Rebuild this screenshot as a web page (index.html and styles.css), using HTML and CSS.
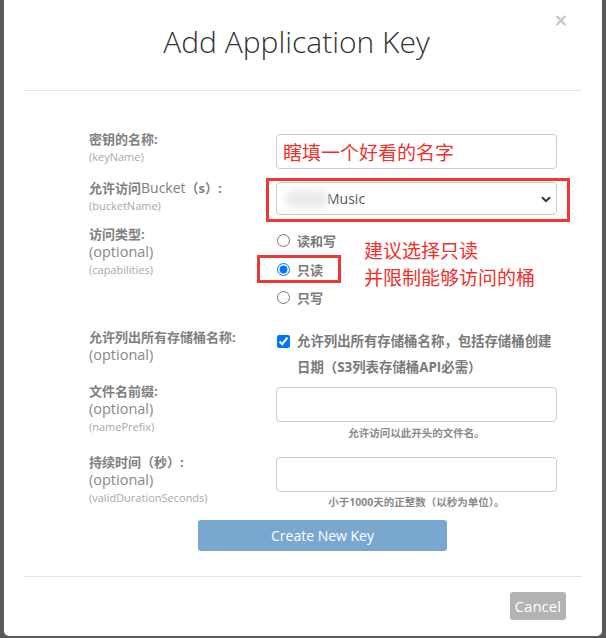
FILE: index.html
```html
<!DOCTYPE html>
<html lang="zh-CN">
<head>
  <meta charset="UTF-8">
  <meta name="viewport" content="width=device-width, initial-scale=1.0">
  <title>Add Application Key</title>
  <link rel="stylesheet" href="styles.css">
</head>
<body>
  <div class="modal">
    <button class="close">&times;</button>
    <div class="modal-header">
      <h2>Add Application Key</h2>
    </div>

    <form class="modal-body">
      <div class="row row-name">
        <div class="label">
          <div class="label-main">密钥的名称:</div>
          <div class="label-key">(keyName)</div>
        </div>
        <div class="control">
          <input type="text" class="input-field input-red" value="瞎填一个好看的名字">
        </div>
      </div>

      <div class="row row-bucket">
        <div class="label">
          <div class="label-main">允许访问<span class="latin">Bucket</span>（s）:</div>
          <div class="label-key">(bucketName)</div>
        </div>
        <div class="control">
          <div class="mark-box select-mark">
            <div class="select-wrap">
              <span class="blur-blob"></span>
              <select class="select-field">
                <option>Music</option>
              </select>
              <svg class="chevron" width="10" height="7" viewBox="0 0 10 7"><path d="M1 1.2 L5 5.2 L9 1.2" fill="none" stroke="#333" stroke-width="2"/></svg>
            </div>
          </div>
        </div>
      </div>

      <div class="row row-caps">
        <div class="label">
          <div class="label-main">访问类型:</div>
          <div class="label-opt">(optional)</div>
          <div class="label-key">(capabilities)</div>
        </div>
        <div class="control radios">
          <label class="radio-line"><input type="radio" name="cap"> 读和写</label>
          <label class="radio-line radio-marked"><input type="radio" name="cap" checked> 只读</label>
          <label class="radio-line"><input type="radio" name="cap"> 只写</label>
          <div class="note">建议选择只读<br>并限制能够访问的桶</div>
        </div>
      </div>

      <div class="row row-list">
        <div class="label">
          <div class="label-main">允许列出所有存储桶名称:</div>
          <div class="label-opt">(optional)</div>
        </div>
        <div class="control">
          <label class="check-line">
            <input type="checkbox" checked>
            <span class="check-text">允许列出所有存储桶名称，包括存储桶创建日期（S3列表存储桶API必需）</span>
          </label>
        </div>
      </div>

      <div class="row row-prefix">
        <div class="label">
          <div class="label-main">文件名前缀:</div>
          <div class="label-opt">(optional)</div>
          <div class="label-key">(namePrefix)</div>
        </div>
        <div class="control">
          <input type="text" class="input-field">
          <div class="help">允许访问以此开头的文件名。</div>
        </div>
      </div>

      <div class="row row-duration">
        <div class="label">
          <div class="label-main">持续时间（秒）:</div>
          <div class="label-opt">(optional)</div>
          <div class="label-key">(validDurationSeconds)</div>
        </div>
        <div class="control">
          <input type="text" class="input-field">
          <div class="help help-tight">小于1000天的正整数（以秒为单位）。</div>
        </div>
      </div>

      <button type="button" class="btn-create">Create New Key</button>
    </form>

    <div class="modal-footer">
      <button type="button" class="btn-cancel">Cancel</button>
    </div>
  </div>
</body>
</html>
```

FILE: styles.css
```css
body {
  margin: 0;
  height: 638px;
  overflow: hidden;
  background: #595959;
  font-family: 'Open Sans', 'Noto Sans CJK SC', sans-serif;
  color: #333;
}

.modal {
  position: relative;
  margin: 0 4px;
  width: 598px;
  height: 636px;
  background: #fff;
  border-radius: 0 0 5px 5px;
}

.close {
  position: absolute;
  top: 10px;
  right: 34px;
  border: none;
  background: none;
  padding: 0;
  font-family: 'DejaVu Sans', sans-serif;
  font-size: 17px;
  font-weight: bold;
  line-height: 20px;
  color: #c4c4c4;
  cursor: pointer;
}

.modal-header {
  margin: 0 20px;
  height: 90px;
  border-bottom: 1px solid #e5e5e5;
  text-align: center;
}

.modal-header h2 {
  margin: 0;
  padding: 26px 13px 0 0;
  font-size: 30px;
  font-weight: 300;
  line-height: 31px;
  color: #333;
}

.modal-body {
  width: 468px;
  margin: 0;
  padding: 39px 0 25px 85px;
}

.row {
  display: grid;
  grid-template-columns: 187px 281px;
  align-items: start;
}

.row-bucket { margin-top: 10px; }
.row-caps { margin-top: 10px; }
.row-list { margin-top: 17px; }
.row-prefix { margin-top: 2px; }
.row-duration { margin-top: 12px; }

.label-main {
  font-size: 13px;
  font-weight: bold;
  line-height: 18px;
  color: #808080;
  white-space: nowrap;
}

.label-main .latin {
  font-weight: normal;
  font-size: 14px;
}

.label-opt {
  font-size: 14.5px;
  line-height: 18px;
  color: #888;
}

.label-key {
  font-size: 11px;
  line-height: 18px;
  color: #a8a8a8;
}

.control {
  position: relative;
}

.input-field {
  display: block;
  box-sizing: border-box;
  width: 281px;
  height: 35px;
  margin-top: 4px;
  padding: 0 6px;
  border: 1px solid #ccc;
  border-radius: 4px;
  font-family: inherit;
  font-size: 14px;
  color: #555;
}

.input-red {
  font-size: 19px;
  color: #f0302c;
}

.row-prefix .input-field { margin-top: 5px; }

.mark-box {
  border: 3px solid #ee3834;
}

.select-mark {
  margin: -1px -13px -7px -10px;
  padding: 1px 10px 4px 7px;
}

.select-wrap {
  position: relative;
  height: 33px;
}

.select-field {
  display: block;
  box-sizing: border-box;
  width: 281px;
  height: 33px;
  padding: 0 0 0 50px;
  border: 1px solid #ccc;
  border-radius: 4px;
  background: #fff;
  appearance: none;
  -webkit-appearance: none;
  font-family: inherit;
  font-size: 14px;
  color: #555;
}

.blur-blob {
  position: absolute;
  left: 9px;
  top: 8px;
  width: 44px;
  height: 18px;
  border-radius: 9px;
  background: #ececec;
  filter: blur(3px);
}

.chevron {
  position: absolute;
  right: 6px;
  top: 14px;
}

.radios {
  padding-top: 1px;
}

.radio-line {
  display: flex;
  align-items: center;
  gap: 7px;
  height: 28px;
  padding-left: 1px;
  font-size: 13px;
  font-weight: bold;
  color: #7a7a7a;
}

.radio-line input,
.check-line input {
  flex: none;
  width: 13px;
  height: 13px;
  margin: 0;
}

.radio-marked {
  box-sizing: border-box;
  width: 84px;
  margin: 1px 0 0 -19px;
  padding-left: 17px;
  border: 3px solid #ee3834;
}

.note {
  position: absolute;
  left: 88px;
  top: 13px;
  font-size: 19px;
  line-height: 27px;
  color: #f0302c;
  white-space: nowrap;
}

.check-line {
  display: flex;
  align-items: flex-start;
  gap: 7px;
  padding-left: 1px;
  font-size: 13.4px;
  font-weight: bold;
  line-height: 26px;
  color: #7a7a7a;
}

.check-line input {
  margin-top: 7px;
}

.help {
  margin-top: 3px;
  font-size: 10.5px;
  font-weight: bold;
  line-height: 16px;
  color: #8a8a8a;
  text-align: center;
}

.help-tight { margin-top: 2px; }

.btn-create {
  display: block;
  width: 249px;
  height: 31px;
  margin: 10px auto 0 109px;
  border: none;
  border-radius: 3px;
  background: #7aa7d0;
  color: #fff;
  font-family: inherit;
  font-size: 14px;
  cursor: pointer;
}

.modal-footer {
  margin: 0 20px;
  padding: 15px 16px 15px 0;
  border-top: 1px solid #e5e5e5;
  display: flex;
  justify-content: flex-end;
}

.btn-cancel {
  height: 28px;
  padding: 0 5px;
  border: none;
  border-radius: 3px;
  background: #b3b3b3;
  color: #fff;
  font-family: inherit;
  font-size: 15px;
  cursor: pointer;
}
```
